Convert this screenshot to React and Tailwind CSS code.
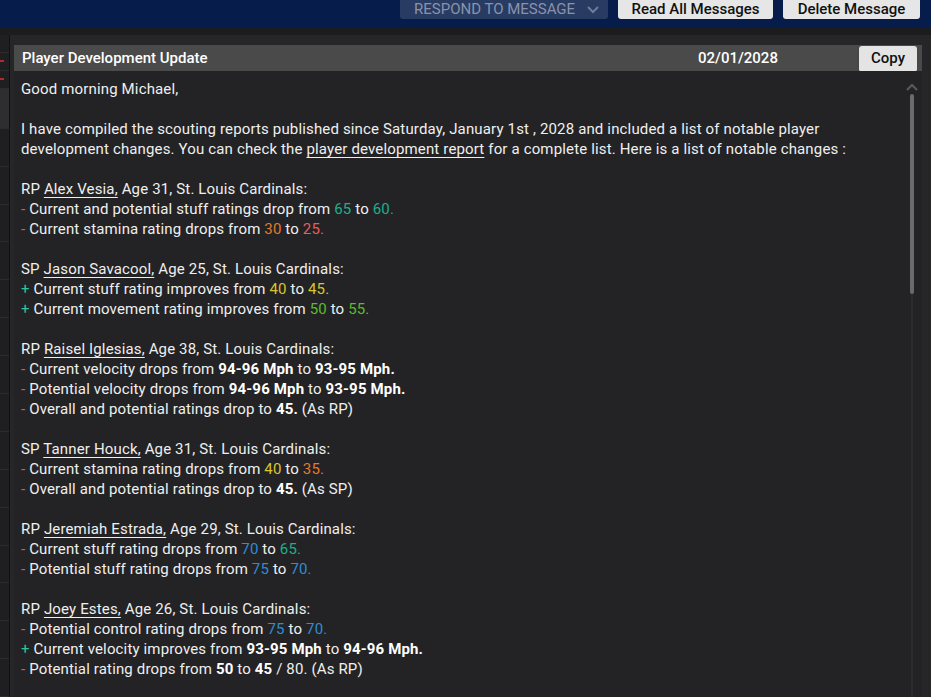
import React from "react";

const C = {
  red: "text-[#e0564f]",
  plus: "text-[#2fc49c]",
  teal: "text-[#1fae8a]",
  orange: "text-[#e47a2a]",
  pink: "text-[#e45f5f]",
  yellow: "text-[#d9c72b]",
  green: "text-[#5cbb2c]",
  blue: "text-[#2f8cd6]",
};

function Name({ children }) {
  return <span className="underline underline-offset-[3px]">{children}</span>;
}

function B({ children }) {
  return <span className="font-bold text-white">{children}</span>;
}

function Line({ sign = "-", children }) {
  return (
    <div>
      <span className={sign === "-" ? C.red : C.plus}>{sign}</span> {children}
    </div>
  );
}

const blocks = [
  {
    head: ["RP", "Alex Vesia,", "Age 31, St. Louis Cardinals:"],
    lines: [
      ["-", <>Current and potential stuff ratings drop from <span className={C.teal}>65</span> to <span className={C.teal}>60.</span></>],
      ["-", <>Current stamina rating drops from <span className={C.orange}>30</span> to <span className={C.pink}>25.</span></>],
    ],
  },
  {
    head: ["SP", "Jason Savacool,", "Age 25, St. Louis Cardinals:"],
    lines: [
      ["+", <>Current stuff rating improves from <span className={C.yellow}>40</span> to <span className={C.yellow}>45.</span></>],
      ["+", <>Current movement rating improves from <span className={C.green}>50</span> to <span className={C.green}>55.</span></>],
    ],
  },
  {
    head: ["RP", "Raisel Iglesias,", "Age 38, St. Louis Cardinals:"],
    lines: [
      ["-", <>Current velocity drops from <B>94-96 Mph</B> to <B>93-95 Mph.</B></>],
      ["-", <>Potential velocity drops from <B>94-96 Mph</B> to <B>93-95 Mph.</B></>],
      ["-", <>Overall and potential ratings drop to <B>45.</B> (As RP)</>],
    ],
  },
  {
    head: ["SP", "Tanner Houck,", "Age 31, St. Louis Cardinals:"],
    lines: [
      ["-", <>Current stamina rating drops from <span className={C.yellow}>40</span> to <span className={C.orange}>35.</span></>],
      ["-", <>Overall and potential ratings drop to <B>45.</B> (As SP)</>],
    ],
  },
  {
    head: ["RP", "Jeremiah Estrada,", "Age 29, St. Louis Cardinals:"],
    lines: [
      ["-", <>Current stuff rating drops from <span className={C.blue}>70</span> to <span className={C.teal}>65.</span></>],
      ["-", <>Potential stuff rating drops from <span className={C.blue}>75</span> to <span className={C.blue}>70.</span></>],
    ],
  },
  {
    head: ["RP", "Joey Estes,", "Age 26, St. Louis Cardinals:"],
    lines: [
      ["-", <>Potential control rating drops from <span className={C.blue}>75</span> to <span className={C.blue}>70.</span></>],
      ["+", <>Current velocity improves from <B>93-95 Mph</B> to <B>94-96 Mph.</B></>],
      ["-", <>Potential rating drops from <B>50</B> to <B>45</B> / 80. (As RP)</>],
    ],
  },
];

export default function App() {
  return (
    <div className="w-[931px] h-[697px] overflow-hidden bg-[#1c1c1e] flex flex-col" style={{ fontFamily: "Roboto, 'Liberation Sans', sans-serif" }}>
      {/* top bar */}
      <div className="h-[28px] shrink-0 bg-[#061c4b] flex items-start justify-end gap-[10px] pr-[11px]">
        <div className="w-[208px] h-[19px] bg-[#283b63] rounded-b-[3px] flex items-center justify-between pl-[14px] pr-[8px] text-[15px] text-[#8893ab] leading-none">
          <span>RESPOND TO MESSAGE</span>
          <svg width="14" height="10" viewBox="0 0 14 10" fill="none" stroke="#6f7c98" strokeWidth="2"><path d="M2 2l5 5 5-5" /></svg>
        </div>
        <div className="w-[155px] h-[19px] bg-[#e6e6e6] rounded-b-[3px] flex items-center justify-center text-[15px] font-medium text-[#111] leading-none">Read All Messages</div>
        <div className="w-[137px] h-[19px] bg-[#e6e6e6] rounded-b-[3px] flex items-center justify-center text-[15px] font-medium text-[#111] leading-none">Delete Message</div>
      </div>

      <div className="flex flex-1 min-h-0 pt-[7px]">
        {/* sidebar sliver */}
        <div className="w-[10px] shrink-0 bg-[#1f1f21] border-r border-[#111] flex flex-col">
          <div className="h-[18px] border-b border-[#2c2c2c]" />
          <div className="h-[18px] border-b border-[#2c2c2c] flex items-center"><div className="w-[4px] h-[2px] bg-[#b32a2a]" /></div>
          <div className="h-[18px] border-b border-[#2c2c2c] flex items-center"><div className="w-[4px] h-[2px] bg-[#b32a2a]" /></div>
          <div className="h-[40px] border-b border-[#2c2c2c] bg-[#2e2e30]" />
          {[...Array(15)].map((_, i) => (
            <div key={i} className="h-[38px] border-b border-[#2c2c2c]" />
          ))}
        </div>

        {/* message panel */}
        <div className="flex-1 bg-[#262628] pt-[10px] pl-[4px] pr-[9px] flex flex-col">
          <div className="h-[26px] shrink-0 bg-[#4a4a4a] flex items-center pl-[8px] text-[15px] font-medium text-white">
            <span className="flex-1">Player Development Update</span>
            <span className="w-[161px]">02/01/2028</span>
            <div className="w-[58px] h-[26px] mt-[1px] mr-[5px] bg-[#e4e4e4] rounded-[3px] flex items-center justify-center text-[15px] text-[#111] shadow">Copy</div>
          </div>
          <div className="flex-1 flex bg-[#232325]">
            <div className="flex-1 pl-[7px] pt-[8px] text-[15px] tracking-[0.15px] leading-[20px] text-[#efefef]">
              <div>Good morning Michael,</div>
              <div className="h-[20px]" />
              <div>
                I have compiled the scouting reports published since Saturday, January 1st , 2028 and included a list of notable player
                <br />
                development changes. You can check the <Name>player development report</Name> for a complete list. Here is a list of notable changes :
              </div>
              {blocks.map((b, i) => (
                <div key={i} className="mt-[20px]">
                  <div>
                    {b.head[0]} <Name>{b.head[1]}</Name> {b.head[2]}
                  </div>
                  {b.lines.map(([s, t], j) => (
                    <Line key={j} sign={s}>{t}</Line>
                  ))}
                </div>
              ))}
            </div>
            <div className="w-[14px] shrink-0 flex flex-col items-center pt-[12px] mr-[3px]">
              <svg width="14" height="8" viewBox="0 0 14 8" fill="none" stroke="#5a5a5e" strokeWidth="2"><path d="M2 7l5-5 5 5" /></svg>
              <div className="w-[4px] h-[200px] mt-[3px] rounded-full bg-[#6a6a6e]" />
              <div className="w-[2px] flex-1 bg-[#2c2c2f]" />
            </div>
          </div>
        </div>
      </div>
    </div>
  );
}
